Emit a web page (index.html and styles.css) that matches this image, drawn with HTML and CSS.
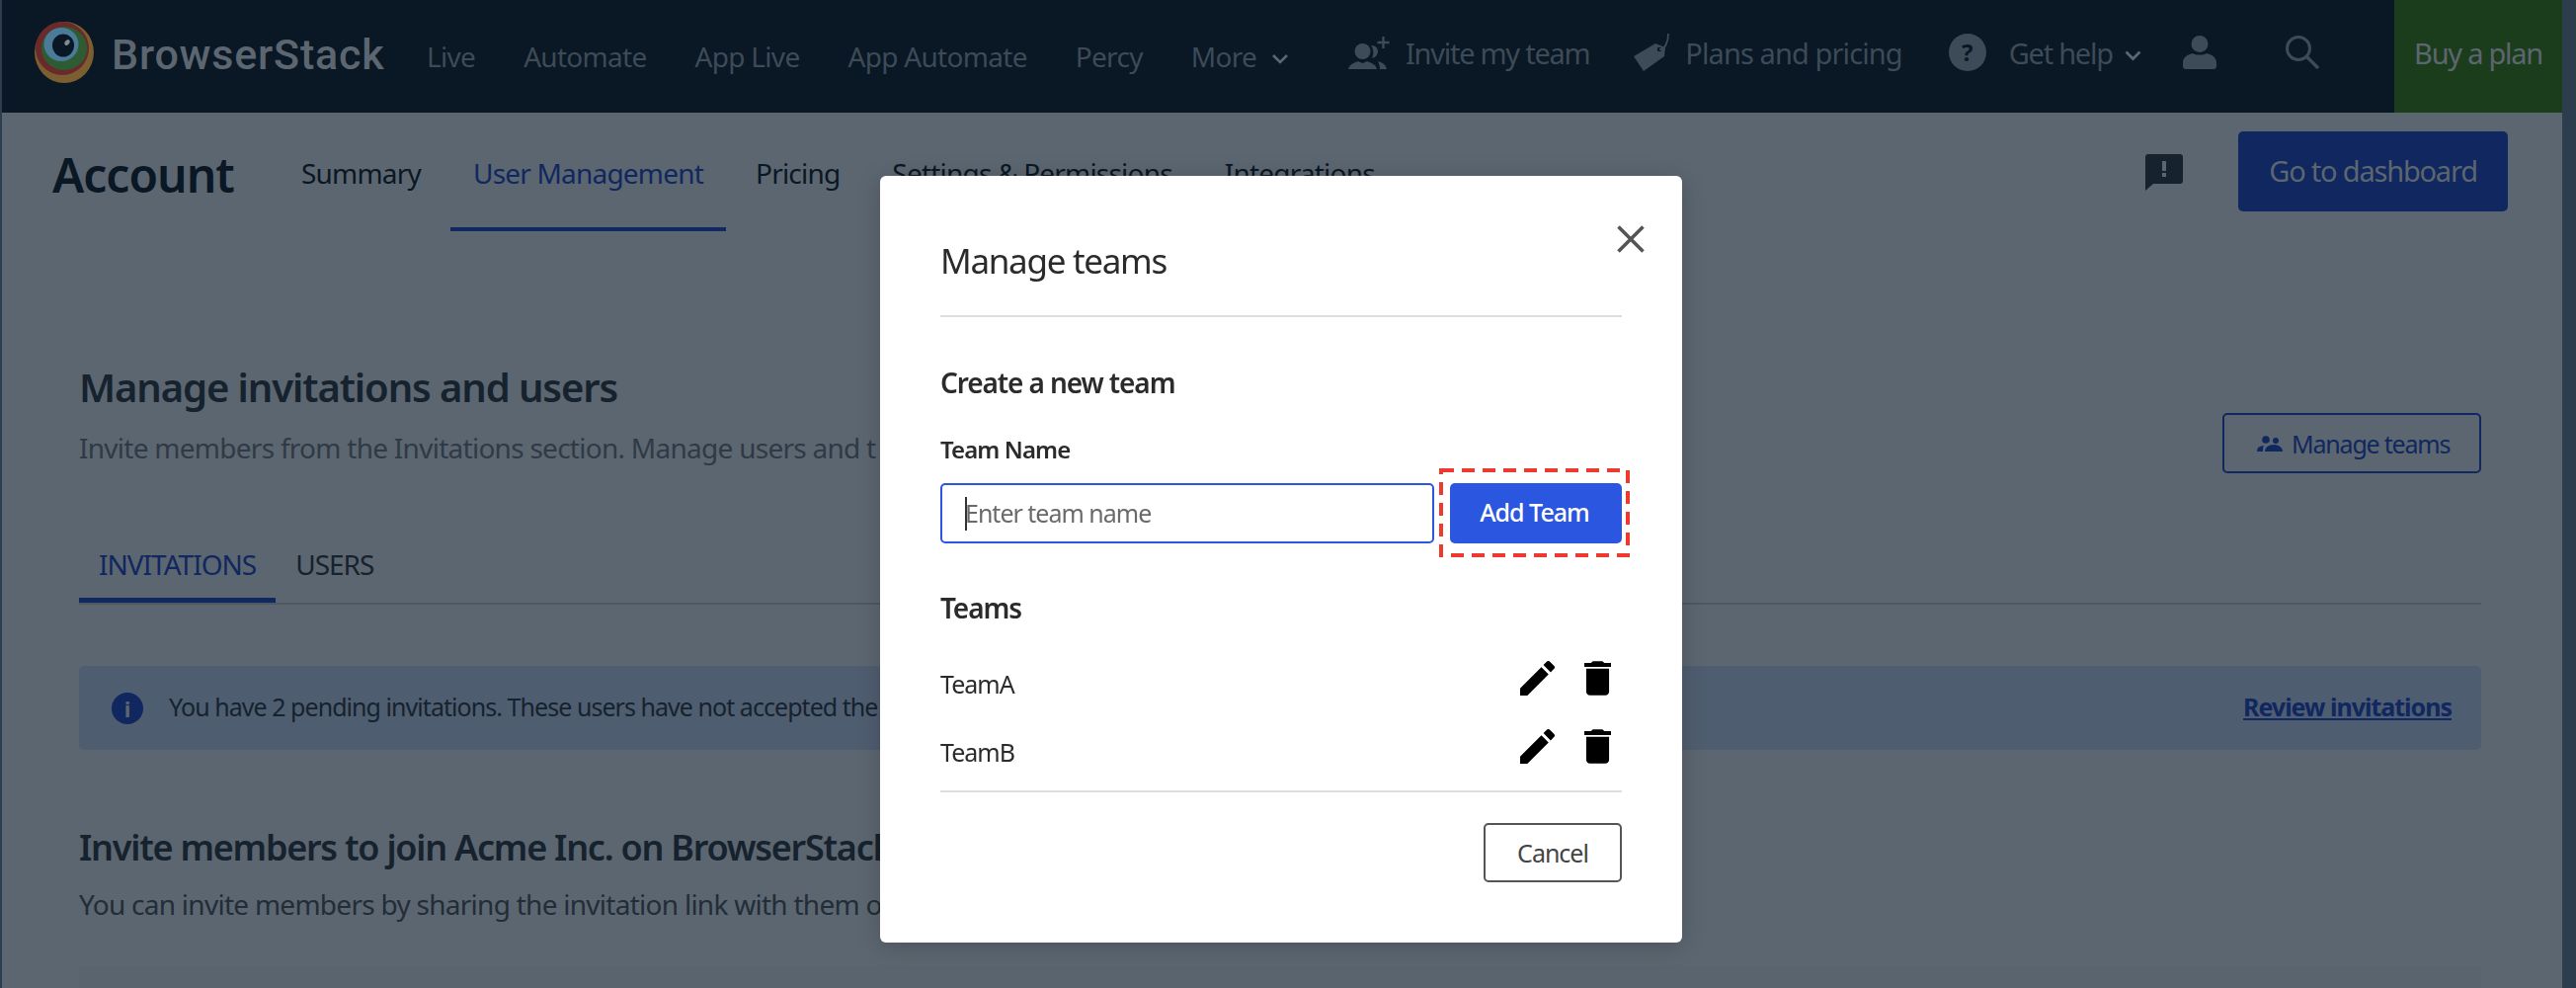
FILE: index.html
```html
<!DOCTYPE html>
<html lang="en">
<head>
<meta charset="utf-8">
<title>Manage teams</title>
<link rel="stylesheet" href="styles.css">
</head>
<body>
<div class="page">
  <header class="topbar">
    <div class="brand">
      <svg class="logo" viewBox="0 0 62 62" aria-hidden="true">
        <ellipse cx="31" cy="31" rx="30" ry="31" fill="#7b5f30"/>
        <ellipse cx="29" cy="27" rx="27" ry="27" fill="#6a2a2c"/>
        <ellipse cx="31" cy="27" rx="23" ry="22" fill="#2e5c32"/>
        <ellipse cx="28" cy="23" rx="17.500" ry="17" fill="#4c7a99"/>
        <ellipse cx="30" cy="24" rx="11" ry="11.500" fill="#0a1724"/>
        <ellipse cx="34" cy="21" rx="3.200" ry="2.200" fill="#7f8a92" transform="rotate(-50 34 21)"/>
      </svg>
      <span class="brand-name">BrowserStack</span>
    </div>
    <nav class="mainnav">
      <a>Live</a><a>Automate</a><a>App Live</a><a>App Automate</a><a>Percy</a>
      <a class="more">More
        <svg class="chev" viewBox="0 0 18 12"><path d="M2 2l7 7 7-7" fill="none" stroke="#5c6670" stroke-width="2.600"/></svg>
      </a>
    </nav>
    <div class="utilnav">
      <a class="u-invite">
        <svg class="ic-invite" viewBox="0 0 43 33"><circle cx="14.500" cy="15" r="8" fill="#3d4a57"/><path d="M0 33c1-5 7-7 10-8l4.500 2 4.500-2c3 1 9 3 10 8z" fill="#3d4a57"/><path d="M23 9c5 0 7 3 7 6s-2 6-6 7c2-4 2-9-1-13z" fill="#3d4a57"/><path d="M30 25c4 1 8 3 9 8h-7c0-3-1-6-2-8z" fill="#3d4a57"/><path d="M35.500 0v12M29.500 6h12" stroke="#3d4a57" stroke-width="2.400" fill="none"/></svg>
        Invite my team
      </a>
      <a class="u-plans">
        <svg class="ic-tag" viewBox="0 0 37 38"><path d="M0 23L22 10l10 4-1 9L10 38z" fill="#3d4a57"/><circle cx="26" cy="16" r="2.200" fill="#0a1724"/><path d="M26 16c6 0 9-8 9-16" fill="none" stroke="#3d4a57" stroke-width="1.800"/></svg>
        Plans and pricing
      </a>
      <a class="u-help">
        <span class="help-dot">?</span>
        <span class="help-label">Get help</span>
        <svg class="chev-sm" viewBox="0 0 17 11"><path d="M1.500 1.500L8.500 8.500l7-7" fill="none" stroke="#5c6670" stroke-width="2.800"/></svg>
      </a>
      <svg class="ic-user" viewBox="0 0 34 34"><circle cx="17" cy="8.500" r="8.500" fill="#3d4a57"/><path d="M0 31v-4c0-5 5-8 10-9 4 2 10 2 14 0 5 1 10 4 10 9v4c0 2-1 3-3 3H3c-2 0-3-1-3-3z" fill="#3d4a57"/></svg>
      <svg class="ic-search" viewBox="0 0 36 36"><circle cx="14" cy="14" r="11.500" fill="none" stroke="#3d4a57" stroke-width="3"/><path d="M22.500 22.500L34 34" stroke="#3d4a57" stroke-width="3.400"/></svg>
    </div>
    <a class="buy">Buy a plan</a>
  </header>

  <section class="subbar">
    <h1 class="account">Account</h1>
    <nav class="subnav">
      <a>Summary</a><a class="active">User Management</a><a>Pricing</a><a>Settings &amp; Permissions</a><a>Integrations</a>
    </nav>
    <div class="subbar-right">
      <svg class="ic-feedback" viewBox="0 0 38 37"><path d="M3 0h32a3 3 0 013 3v24a3 3 0 01-3 3H8l-8 7V3a3 3 0 013-3z" fill="#16222e"/><rect x="17" y="7" width="4" height="10" fill="#5c6670"/><rect x="17" y="19" width="4" height="4" fill="#5c6670"/></svg>
      <a class="dash">Go to dashboard</a>
    </div>
  </section>

  <main class="content">
    <div class="head-row">
      <div>
        <h2 class="h-main">Manage invitations and users</h2>
        <p class="sub">Invite members from the Invitations section. Manage users and t</p>
      </div>
      <a class="manage-btn">
        <svg class="ic-people" viewBox="0 0 26 16"><circle cx="9" cy="4" r="3.800" fill="#10275f"/><circle cx="19" cy="5" r="3" fill="#10275f"/><path d="M0 16c0-4 3-6 7-6-1 2-1 4-1 6z M8 16c0-4 4-7 9-7s9 3 9 7z" fill="#10275f"/></svg>
        Manage teams
      </a>
    </div>
    <div class="tabs">
      <a class="tab on">INVITATIONS</a><a class="tab">USERS</a>
    </div>
    <div class="alert">
      <span class="info">i</span>
      <span class="alert-text">You have 2 pending invitations. These users have not accepted the</span>
      <a class="review">Review invitations</a>
    </div>
    <h2 class="h-invite">Invite members to join Acme Inc. on BrowserStack</h2>
    <p class="sub sub-invite">You can invite members by sharing the invitation link with them o</p>
  </main>
  <div class="band"></div>
</div>

<div class="modal" role="dialog">
  <svg class="close" viewBox="0 0 28 28"><path d="M1.500 1.500l25 25M26.500 1.500l-25 25" stroke="#555" stroke-width="3.600" fill="none"/></svg>
  <h3 class="m-title">Manage teams</h3>
  <h4 class="m-create">Create a new team</h4>
  <label class="m-label">Team Name</label>
  <div class="m-form">
    <div class="m-input"><span class="caret"></span>Enter team name</div>
    <div class="m-highlight">
      <svg class="dashes" viewBox="0 0 193 90"><rect x="2" y="2" width="189" height="86" fill="none" stroke="#ee3a2e" stroke-width="4" stroke-dasharray="13 8"/></svg>
      <button class="m-add">Add Team</button>
    </div>
  </div>
  <h4 class="m-teams">Teams</h4>
  <ul class="m-list">
    <li class="m-row">
      <span>TeamA</span>
      <span class="m-actions">
        <svg class="ic-edit" viewBox="3 3 18 18"><path d="M3 17.250V21h3.750L17.810 9.940l-3.750-3.750L3 17.250zM20.710 7.040a1 1 0 000-1.410l-2.340-2.340a1 1 0 00-1.410 0l-1.830 1.830 3.750 3.750 1.830-1.830z"/></svg>
        <svg class="ic-trash" viewBox="5 3 14 18"><path d="M6 19c0 1.100.9 2 2 2h8c1.100 0 2-.9 2-2V7H6v12zM19 4h-3.500l-1-1h-5l-1 1H5v2h14V4z"/></svg>
      </span>
    </li>
    <li class="m-row">
      <span>TeamB</span>
      <span class="m-actions">
        <svg class="ic-edit" viewBox="3 3 18 18"><path d="M3 17.250V21h3.750L17.810 9.940l-3.750-3.750L3 17.250zM20.710 7.040a1 1 0 000-1.410l-2.340-2.340a1 1 0 00-1.410 0l-1.830 1.830 3.750 3.750 1.830-1.830z"/></svg>
        <svg class="ic-trash" viewBox="5 3 14 18"><path d="M6 19c0 1.100.9 2 2 2h8c1.100 0 2-.9 2-2V7H6v12zM19 4h-3.500l-1-1h-5l-1 1H5v2h14V4z"/></svg>
      </span>
    </li>
  </ul>
  <div class="m-foot"><button class="m-cancel">Cancel</button></div>
</div>
</body>
</html>
```
FILE: styles.css
```css
* { box-sizing: border-box; }
html, body { margin: 0; padding: 0; height: 1000px; overflow: hidden; background: #5c6670; }
body { font-family: "Noto Sans", "Open Sans", sans-serif; }
a { display: inline-block; }
h1, h2, h3, h4, p, ul { margin: 0; padding: 0; font-weight: normal; }
ul { list-style: none; }

.page {
  width: 2608px; height: 1000px; background: #5c6670;
  border-left: 2px solid #2c3d4e; border-right: 14px solid #2c3d4e;
  display: flex; flex-direction: column; overflow: hidden;
}

/* top bar */
.topbar { height: 114px; flex: none; background: #0a1724; display: flex; align-items: center; color: #3d4a57; }
.brand { display: flex; align-items: center; margin-left: 32px; width: 398px; flex: none; }
.logo { width: 62px; height: 62px; flex: none; margin-top: -8px; }
.brand-name { margin-left: 17px; font: 500 43px/1 Roboto, sans-serif; color: #5c6670; letter-spacing: .8px; margin-top: -4px; }
.mainnav { display: flex; align-items: center; gap: 49px; font-size: 28px; letter-spacing: -.7px; width: 933px; flex: none; }
.more { display: flex; align-items: center; gap: 15px; }
.chev { width: 18px; height: 12px; margin-top: 6px; }
.utilnav { display: flex; align-items: center; font-size: 29px; letter-spacing: -1.26px; flex: 1; color: #3d4a57; height: 100%; padding-bottom: 8px; }
.utilnav a { display: flex; align-items: center; }
.ic-invite { width: 43px; height: 33px; margin-right: 15px; }
.ic-tag { width: 37px; height: 38px; margin: 0 15px 0 45px; }
.u-plans { letter-spacing: -.9px; }
.u-help { margin-left: 47px; }
.help-dot { width: 38px; height: 38px; border-radius: 50%; background: #3d4a57; color: #0a1724; font: 700 24px/38px "Noto Sans", sans-serif; text-align: center; letter-spacing: 0; }
.help-label { margin: 0 12px 0 23px; }
.chev-sm { width: 17px; height: 11px; margin-top: 6px; }
.ic-user { width: 34px; height: 34px; margin-left: 42px; }
.ic-search { width: 36px; height: 36px; margin-left: 69px; }
.buy { width: 170px; height: 114px; flex: none; background: #1c3d1c; color: #5c6670; font-size: 29px; letter-spacing: -1.26px; line-height: 108px; text-align: center; }

/* sub bar */
.subbar { height: 128px; flex: none; display: flex; align-items: flex-start; }
.account { width: 229px; flex: none; margin: 30px 0 0 51px; font-size: 48px; line-height: 66px; font-weight: 600; color: #0a1724; letter-spacing: -1px; }
.subnav { display: flex; height: 120px; font-size: 28px; letter-spacing: -.8px; color: #0a1724; }
.subnav a { padding: 41px 23px 0; margin-right: 7px; height: 120px; line-height: 40px; }
.subnav a.active { color: #10275f; border-bottom: 4px solid #10275f; }
.subbar-right { margin-left: auto; display: flex; align-items: flex-start; margin-right: 55px; }
.ic-feedback { width: 38px; height: 37px; margin: 42px 56px 0 0; }
.dash { margin-top: 19px; width: 273px; height: 81px; background: #10275f; border-radius: 5px; color: #5c6670; font-size: 29px; letter-spacing: -1.2px; line-height: 80px; text-align: center; }

/* content */
.content { padding: 0 82px 0 78px; flex: 1; }
.head-row { display: flex; justify-content: space-between; align-items: flex-start; height: 301px; }
.h-main { margin-top: 122px; font-size: 40px; line-height: 56px; font-weight: 600; color: #16222e; letter-spacing: -1.1px; }
.h-invite { margin-top: 71px; font-size: 36px; line-height: 56px; font-weight: 600; color: #16222e; letter-spacing: -1.25px; white-space: nowrap; }
.sub { margin-top: 13px; font-size: 28px; line-height: 40px; color: #2f3a46; letter-spacing: -.73px; white-space: nowrap; }
.sub-invite { margin-top: 9px; color: #222d38; }
.manage-btn { margin-top: 176px; width: 262px; height: 61px; border: 2px solid #10275f; border-radius: 5px; color: #10275f; font-size: 25px; letter-spacing: -1.2px; display: flex; align-items: center; padding-left: 33px; gap: 9px; }
.ic-people { width: 26px; height: 16px; flex: none; }
.tabs { display: flex; border-bottom: 2px solid #4e5863; height: 69px; }
.tab { font-size: 28px; letter-spacing: -1px; color: #16222e; padding: 0 20px; line-height: 56px; height: 67px; }
.tab.on { color: #10275f; border-bottom: 5px solid #10275f; }
.alert { margin-top: 62px; height: 85px; border-radius: 5px; background: #4f5d70; display: flex; align-items: center; padding: 0 30px 0 33px; font-size: 25px; letter-spacing: -.95px; color: #16222e; }
.info { width: 32px; height: 32px; border-radius: 50%; background: #10275f; color: #5c6670; font: 700 22px/32px "Noto Sans", sans-serif; text-align: center; margin-right: 26px; flex: none; letter-spacing: 0; }
.alert-text { white-space: nowrap; padding-bottom: 3px; }
.review { margin-left: auto; font-weight: 700; color: #10275f; text-decoration: underline; letter-spacing: -1px; padding-bottom: 3px; }
.band { height: 22px; flex: none; background: #5a646e; margin: 0 82px 0 78px; }

/* modal */
.modal { position: fixed; left: 891px; top: 178px; width: 812px; height: 776px; background: #fff; border-radius: 6px; padding: 0 61px; color: #2b2b2b; box-shadow: 0 4px 24px rgba(0,0,0,.18); }
.close { position: absolute; left: 746px; top: 50px; width: 28px; height: 28px; }
.m-title { font-size: 35px; letter-spacing: -1.3px; line-height: 56px; height: 143px; padding-top: 58px; border-bottom: 2px solid #ddd; }
.m-create { margin-top: 46px; font-size: 28px; line-height: 40px; font-weight: 600; letter-spacing: -1.1px; }
.m-label { display: block; margin-top: 28px; font-size: 24px; line-height: 40px; font-weight: 600; letter-spacing: -.9px; }
.m-form { display: flex; margin-top: 14px; height: 61px; gap: 16px; }
.m-input { width: 500px; flex: none; height: 61px; border: 2px solid #2a56e0; border-radius: 5px; padding-left: 23px; font-size: 25px; line-height: 56px; color: #6a6a6a; letter-spacing: -1px; position: relative; }
.caret { position: absolute; left: 23px; top: 12px; width: 2px; height: 34px; background: #333; }
.m-highlight { position: relative; flex: none; width: 174px; }
.dashes { position: absolute; left: -11px; top: -15px; width: 193px; height: 90px; }
.m-add { display: block; width: 174px; height: 61px; background: #2a56e0; color: #fff; border: 0; border-radius: 5px; font: 500 25px "Noto Sans", sans-serif; letter-spacing: -1px; padding: 0 3px 3px 0; position: relative; }
.m-teams { margin-top: 45px; font-size: 28px; line-height: 40px; font-weight: 600; letter-spacing: -1.1px; }
.m-list { margin-top: 33px; border-bottom: 2px solid #ddd; height: 134px; }
.m-row { display: flex; justify-content: space-between; height: 68.500px; font-size: 25px; letter-spacing: -1px; line-height: 48px; }
.m-actions { display: flex; gap: 30px; padding: 1px 11px 0 0; height: 36px; }
.ic-edit { width: 35px; height: 35px; }
.ic-trash { width: 27px; height: 35px; }
.m-foot { display: flex; justify-content: flex-end; margin-top: 31px; }
.m-cancel { width: 140px; height: 60px; background: #fff; border: 2px solid #555; border-radius: 5px; font: 25px "Noto Sans", sans-serif; color: #444; letter-spacing: -1px; padding: 0; }
```
